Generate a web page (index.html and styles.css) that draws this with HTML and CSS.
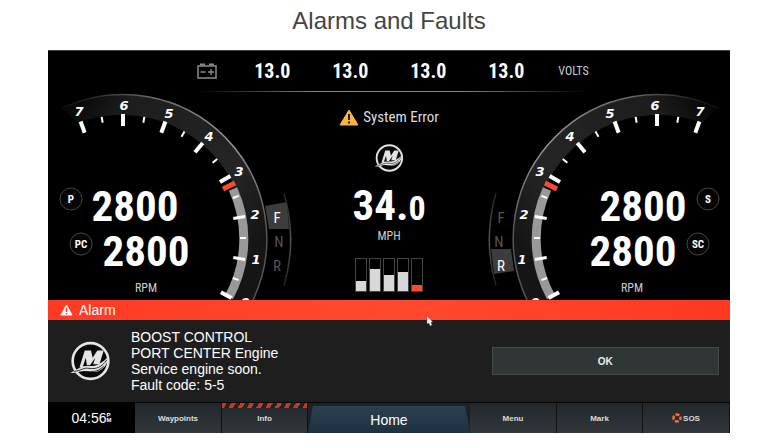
FILE: index.html
```
<!DOCTYPE html>
<html lang="en">

<head>
  <meta charset="UTF-8">
  <meta name="viewport" content="width=device-width, initial-scale=1.0">
  <title>Alarms and Faults</title>
  <link rel="stylesheet" href="styles.css">
</head>

<body>
  <!-- shared shapes -->
  <svg class="defs" width="0" height="0" aria-hidden="true">
    <defs>
      <linearGradient id="band" gradientUnits="userSpaceOnUse" x1="14" y1="0" x2="220" y2="140">
        <stop offset="0" stop-color="#000"/>
        <stop offset=".25" stop-color="#1d1d1d"/>
        <stop offset=".75" stop-color="#252525"/>
        <stop offset="1" stop-color="#151515"/>
      </linearGradient>
      <linearGradient id="rim" gradientUnits="userSpaceOnUse" x1="12" y1="0" x2="220" y2="140">
        <stop offset="0" stop-color="#000"/>
        <stop offset=".3" stop-color="#666"/>
        <stop offset=".7" stop-color="#999"/>
        <stop offset="1" stop-color="#555"/>
      </linearGradient>
      <linearGradient id="edge" x1="0" y1="0" x2="0" y2="1">
        <stop offset="0" stop-color="#222"/>
        <stop offset=".5" stop-color="#555"/>
        <stop offset="1" stop-color="#222"/>
      </linearGradient>
      <symbol id="logo" viewBox="0 0 40 40">
        <circle cx="20.500" cy="20" r="17" fill="#080808" stroke="#e4e4e4" stroke-width="2.500"/>
        <path d="M10 26 15 10h6l1.500 7L27 10h6l-4 13h-6l2-6-5 7h-3l-1-7-3 9z" fill="#e4e4e4"/>
        <path d="M1 31c5-1 8-5 13-6 6-1 9 1 14-2 4-2 7-4 10-8-1 8-5 13-11 15-7 2-10-2-16 0-4 1-7 2-10 1z" fill="#e4e4e4"/>
        <path d="M5 30c7-1 9-4 14-3 7 1 12-1 17-8M14 31c8-2 12 1 19-6" fill="none" stroke="#111" stroke-width=".8"/>
      </symbol>
      <g id="dial" fill="none">
        <path d="M14 16A144 144 0 0 1 205 208L182 208A124 124 0 0 0 30 31Z" fill="url(#band)"/>
        <path d="M14 16A144 144 0 0 1 205 208" stroke="url(#rim)" stroke-width="1.5"/>
        <path d="M185 97A121 121 0 0 1 181 205" stroke="#999" stroke-width="9"/>
        <path d="M175 97 187 91" stroke="#ff4a2e" stroke-width="5"/>
        <path d="M236 101A168 168 0 0 1 236 194" stroke="url(#edge)" stroke-width="1.5"/>
        <g stroke="#fff" stroke-width="4">
          <path d="M75 34V22" transform="rotate(-20 75 146)"/>
          <path d="M75 34V22"/>
          <path d="M75 34V22" transform="rotate(20 75 146)"/>
          <path d="M75 34V22" transform="rotate(40 75 146)"/>
          <path d="M75 34V22" transform="rotate(60 75 146)"/>
          <path d="M75 34V22" stroke-width="3" transform="rotate(80 75 146)"/>
          <path d="M75 34V22" stroke-width="3" transform="rotate(100 75 146)"/>
          <path d="M75 34V22" transform="rotate(119 75 146)"/>
        </g>
        <g stroke="#fff" stroke-width="2">
          <path d="M75 29V23" transform="rotate(-10 75 146)"/>
          <path d="M75 29V23" transform="rotate(10 75 146)"/>
          <path d="M75 29V23" transform="rotate(30 75 146)"/>
          <path d="M75 29V23" transform="rotate(50 75 146)"/>
          <path d="M75 29V23" transform="rotate(70 75 146)"/>
          <path d="M75 29V23" transform="rotate(90 75 146)"/>
          <path d="M75 29V23" transform="rotate(110 75 146)"/>
        </g>
      </g>
    </defs>
  </svg>

  <h1 class="title">Alarms and Faults</h1>

  <main class="display">
    <section class="dash">
      <div class="volts">
        <svg class="battery" viewBox="0 0 20 16" width="20" height="16" fill="none" stroke="#8d8d8d">
          <path d="M1 3h18v12H1z" stroke-width="1.5"/>
          <path d="M3 1.500h5M12 1.500h5" stroke-width="2"/>
          <path d="M3.500 9h5M11 9h6M14 6v6" stroke-width="1.300"/>
        </svg>
        <span class="volt">13.0</span>
        <span class="volt">13.0</span>
        <span class="volt">13.0</span>
        <span class="volt">13.0</span>
        <span class="unit">VOLTS</span>
      </div>

      <div class="cluster">
        <svg class="gauge" viewBox="0 0 252 208" role="img" aria-label="Port engines">
          <path d="M217 114 239 110 241 137 221 137Z" fill="#3c3c3c"/>
          <use href="#dial"/>
          <g class="mark">
            <text x="31" y="24">7</text>
            <text x="76" y="18">6</text>
            <text x="121" y="26">5</text>
            <text x="161" y="49">4</text>
            <text x="191" y="84">3</text>
            <text x="207" y="127">2</text>
            <text x="208" y="172">1</text>
            <text x="197" y="215">0</text>
          </g>
          <g class="gear">
            <text class="on" x="229" y="131">F</text>
            <text x="231" y="155">N</text>
            <text x="229" y="179">R</text>
          </g>
          <circle class="ring" cx="23" cy="107" r="11"/>
          <circle class="ring" cx="33" cy="152" r="11"/>
          <text class="engine" x="23" y="111">P</text>
          <text class="engine" x="33" y="156">PC</text>
          <text class="rpm" x="87" y="129">2800</text>
          <text class="rpm" x="98" y="174">2800</text>
          <text class="label" x="98" y="200">RPM</text>
        </svg>

        <div class="center">
          <div class="error">
            <svg viewBox="0 0 20 17" width="20" height="17">
              <path d="M10 1 19 16H1z" fill="#fdb446" stroke="#fdb446" stroke-linejoin="round"/>
              <path d="M10 5v6M10 12.500v2" stroke="#222" stroke-width="2"/>
            </svg>
            <span>System Error</span>
          </div>
          <svg class="logo-small" viewBox="0 0 40 40"><use href="#logo"/></svg>
          <div class="speed">34.<span>0</span></div>
          <div class="mph">MPH</div>
          <div class="bars">
            <div class="bar"><i style="height: 30%"></i></div>
            <div class="bar"><i style="height: 70%"></i></div>
            <div class="bar"><i style="height: 50%"></i></div>
            <div class="bar"><i style="height: 60%"></i></div>
            <div class="bar low"><i style="height: 19%"></i></div>
          </div>
        </div>

        <svg class="gauge" viewBox="0 0 252 208" role="img" aria-label="Starboard engines">
          <path d="M13 157 33 157 36 179 16 182Z" fill="#3c3c3c"/>
          <use href="#dial" transform="translate(254 0) scale(-1 1)"/>
          <g class="mark">
            <text x="222" y="24">7</text>
            <text x="177" y="18">6</text>
            <text x="132" y="26">5</text>
            <text x="92" y="49">4</text>
            <text x="62" y="84">3</text>
            <text x="46" y="127">2</text>
            <text x="44" y="172">1</text>
            <text x="57" y="215">0</text>
          </g>
          <g class="gear">
            <text x="23" y="131">F</text>
            <text x="21" y="155">N</text>
            <text class="on" x="23" y="179">R</text>
          </g>
          <circle class="ring" cx="230" cy="107" r="11"/>
          <circle class="ring" cx="220" cy="152" r="11"/>
          <text class="engine" x="230" y="111">S</text>
          <text class="engine" x="220" y="156">SC</text>
          <text class="rpm" x="165" y="129">2800</text>
          <text class="rpm" x="155" y="174">2800</text>
          <text class="label" x="154" y="200">RPM</text>
        </svg>
      </div>
    </section>

    <section class="alarm">
      <h2 class="alarm-head">
        <svg viewBox="0 0 13 12" width="13" height="12">
          <path d="M6.500 1 12 11H1z" fill="#fff" stroke="#fff" stroke-linejoin="round"/>
          <path d="M6.500 4v4M6.500 9v1.500" stroke="#ff4029" stroke-width="1.500"/>
        </svg>
        Alarm
      </h2>
      <div class="alarm-body">
        <svg class="logo-big" viewBox="0 0 40 40"><use href="#logo"/></svg>
        <p class="message">BOOST CONTROL<br>PORT CENTER Engine<br>Service engine soon.<br>Fault code: 5-5</p>
        <button class="ok" type="button">OK</button>
      </div>
      <svg class="cursor" viewBox="0 0 8 12" width="8" height="12">
        <path d="M1 1v8l2-1 1 3 2-1-1-3h2z" fill="#fff" stroke="#555" stroke-width=".5"/>
      </svg>
    </section>

    <nav class="nav">
      <div class="clock">04:56<span>P<br>M</span></div>
      <button type="button">Waypoints</button>
      <button class="info" type="button">Info</button>
      <div class="home-slot"><button class="home" type="button">Home</button></div>
      <button type="button">Menu</button>
      <button type="button">Mark</button>
      <button type="button">
        <svg viewBox="0 0 10 10" width="10" height="10" fill="none">
          <circle cx="5" cy="5" r="3.500" stroke="#ff6a3c" stroke-width="2.500" stroke-dasharray="4 1.500" stroke-dashoffset="2"/>
        </svg>
        SOS
      </button>
    </nav>
  </main>
</body>

</html>
```
FILE: styles.css
```
* {
  box-sizing: border-box;
}

body {
  margin: 0;
  background: #fff;
  font-family: "Liberation Sans", Arial, sans-serif;
}

.defs {
  position: absolute;
}

.title {
  margin: 0;
  padding: 6px 2px 14px 0;
  color: #444;
  font-size: 24px;
  font-weight: 400;
  line-height: 30px;
  text-align: center;
}

.display {
  margin: 0 50px 0 48px;
  background: #000;
  color: #fff;
}

.dash {
  overflow: hidden;
  border-top: 1px solid #444;
  font-family: "Liberation Sans Narrow", "Roboto Condensed", sans-serif;
}

/* voltage row */
.volts {
  display: flex;
  align-items: center;
  justify-content: center;
  height: 41px;
  padding: 0 0 2px 8px;
  background: linear-gradient(90deg, transparent 22%, #888 40%, #888 60%, transparent 79%) bottom / 100% 1px no-repeat;
}

.battery {
  margin-right: 16px;
}

.volt {
  width: 78px;
  font-size: 20px;
  font-weight: 700;
  text-align: center;
}

.unit {
  margin-left: 13px;
  color: #ccc;
  font-size: 12px;
}

/* gauges and speed */
.cluster {
  display: grid;
  grid-template-columns: 252fr 178fr 252fr;
}

.gauge {
  display: block;
  width: 100%;
}

.gauge text {
  fill: #fff;
  text-anchor: middle;
}

.mark {
  font: italic 700 13px "DejaVu Sans", sans-serif;
}

.gear {
  font-size: 15px;
}

.gauge .gear text {
  fill: #555;
}

.gauge .gear .on {
  fill: #fff;
}

.ring {
  fill: #050505;
  stroke: #444;
}

.engine {
  font-size: 11px;
  font-weight: 700;
}

.rpm {
  font-size: 43px;
  font-weight: 700;
}

.gauge .label {
  fill: #ccc;
  font-size: 12px;
}

.center {
  display: flex;
  flex-direction: column;
  align-items: center;
}

.error {
  display: flex;
  align-items: center;
  gap: 4px;
  margin-top: 15px;
  color: #ddd;
  font-size: 15px;
  line-height: 20px;
}

.logo-small {
  width: 30px;
  height: 30px;
  margin-top: 16px;
}

.speed {
  margin-top: 12px;
  font-size: 43px;
  font-weight: 700;
  line-height: 40px;
}

.speed span {
  font-size: 34px;
}

.mph {
  color: #ccc;
  font-size: 12px;
  line-height: 16px;
}

.bars {
  display: flex;
  gap: 2px;
  margin-top: 14px;
}

.bar {
  display: flex;
  align-items: flex-end;
  width: 12px;
  height: 34px;
  border: 1px solid #444;
}

.bar i {
  width: 100%;
  background: #d8d8d8;
}

.bar.low i {
  background: #ff4a28;
}

/* alarm */
.alarm {
  position: relative;
}

.alarm-head {
  display: flex;
  align-items: center;
  gap: 6px;
  height: 20px;
  margin: 0;
  padding-left: 12px;
  background: linear-gradient(90deg, #ff3a24, #ff4a30 50%, #ff3820);
  font-size: 14px;
  font-weight: 400;
}

.alarm-body {
  display: flex;
  align-items: center;
  height: 82px;
  padding: 0 11px 0 21px;
  background: #1e1e1e;
}

.logo-big {
  width: 42px;
  height: 42px;
}

.message {
  flex: 1;
  margin: 0 0 0 20px;
  font-size: 14px;
  line-height: 16px;
}

.ok {
  width: 35%;
  height: 28px;
  border: 1px solid #454a4b;
  background: #303536;
  color: #eee;
  font: 700 10px "Liberation Sans", Arial, sans-serif;
}

.cursor {
  position: absolute;
  top: 15px;
  left: 378px;
}

/* bottom bar */
.nav {
  display: grid;
  grid-template-columns: 87fr 87fr 86fr 162fr 87fr 86fr 87fr;
  height: 31px;
  border-top: 1px solid #050505;
}

.nav button {
  display: flex;
  align-items: center;
  justify-content: center;
  gap: 1px;
  padding: 0;
  border: 0;
  border-right: 1px solid #111;
  background: linear-gradient(#22272a, #30373b);
  color: #ddd;
  font: 700 8px "Liberation Sans", Arial, sans-serif;
}

.clock {
  display: flex;
  align-items: center;
  justify-content: center;
  font-size: 14px;
}

.clock span {
  font-size: 6px;
  font-weight: 700;
  line-height: 5px;
}

.nav .info {
  background: repeating-linear-gradient(120deg, #c23a2a 0 4px, #222 4px 8px) top / 100% 5px no-repeat, linear-gradient(#22272a, #30373b);
}

.home-slot {
  display: grid;
  padding-top: 3px;
  background: #1c2225;
}

.nav .home {
  border: 0;
  background: linear-gradient(#2b4053, #1d3040);
  clip-path: polygon(3% 0, 97% 0, 100% 100%, 0 100%);
  color: #fff;
  font-size: 14px;
  font-weight: 400;
}
```
